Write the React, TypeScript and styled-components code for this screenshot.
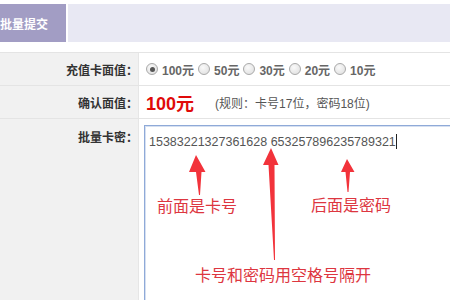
import React from "react"
import styled, { createGlobalStyle } from "styled-components"

const GlobalStyle = createGlobalStyle`
  html, body {
    margin: 0;
    padding: 0;
    overflow: hidden;
    background: #ffffff;
  }
  body {
    font-family: "Liberation Sans", "Noto Sans CJK SC", sans-serif;
    font-size: 12px;
    color: #333;
  }
`

const Page = styled.div`
  width: 450px;
  height: 300px;
  overflow: hidden;
  padding-top: 4px;
  box-sizing: border-box;
`

const TabBar = styled.div`
  display: flex;
  height: 38px;
  gap: 2px;
`

const Tab = styled.div`
  flex: 0 0 66px;
  display: flex;
  align-items: center;
  padding-left: 0;
  background: #a29dc4;
  color: #ffffff;
  font-family: "Noto Sans CJK SC", sans-serif;
  font-size: 12px;
  font-weight: bold;
`

const TabFill = styled.div`
  flex: 1;
  background: #e8e8f3;
`

const Form = styled.div`
  margin-top: 10px;
`

const Row = styled.div<{ $height?: number }>`
  display: grid;
  grid-template-columns: 139px 1fr;
  border-top: 1px solid #e4e4e4;
  height: ${(p) => (p.$height ? `${p.$height}px` : "auto")};
  box-sizing: border-box;
`

const Label = styled.div<{ $top?: boolean }>`
  background: #f1f1f1;
  border-right: 1px solid #e6e6e6;
  display: flex;
  justify-content: flex-end;
  align-items: ${(p) => (p.$top ? "flex-start" : "center")};
  padding-right: 0;
  padding-top: ${(p) => (p.$top ? "9px" : "0")};
  font-family: "Noto Sans CJK SC", sans-serif;
  font-weight: bold;
  font-size: 12px;
  color: #333;
`

const Cell = styled.div<{ $top?: boolean }>`
  display: flex;
  align-items: ${(p) => (p.$top ? "flex-start" : "center")};
  padding-left: ${(p) => (p.$top ? "5px" : "7px")};
  padding-top: ${(p) => (p.$top ? "6px" : "0")};
`

const Option = styled.label`
  display: inline-flex;
  align-items: center;
  gap: 4px;
  margin-right: 4px;
  font-weight: bold;
  color: #666;
`

const Radio = styled.input.attrs({ type: "radio" })`
  appearance: none;
  margin: 0;
  width: 12px;
  height: 12px;
  border-radius: 50%;
  border: 1px solid #a9a9a9;
  background: radial-gradient(circle at 40% 35%, #fafafa 0%, #dcdcdc 100%);
  box-sizing: border-box;
  display: grid;
  place-items: center;

  &:checked::after {
    content: "";
    width: 5px;
    height: 5px;
    border-radius: 50%;
    background: #555;
  }
`

const Amount = styled.span`
  color: #e00a0a;
  font-size: 18px;
  font-weight: bold;
  margin-right: 21px;
`

const Rule = styled.span`
  color: #555;
  font-size: 12px;
`

const CardArea = styled.div`
  position: relative;
  width: 330px;
  height: 200px;
`

const CardBox = styled.div`
  width: 100%;
  height: 100%;
  box-sizing: border-box;
  border: 1px solid #8faad8;
  box-shadow: inset 0 0 0 1px #d6e0f1;
  padding: 8px 4px;
  font-size: 12.5px;
  line-height: 16px;
  color: #555;
  background: #fff;
`

const Caret = styled.span`
  display: inline-block;
  width: 1px;
  height: 15px;
  background: #222;
  vertical-align: -3px;
`

const Overlay = styled.div`
  position: absolute;
  inset: 0;
  pointer-events: none;
`

const Note = styled.span<{ $x: number; $y: number }>`
  position: absolute;
  left: ${(p) => p.$x}px;
  top: ${(p) => p.$y}px;
  font-family: "Noto Sans CJK SC", sans-serif;
  font-size: 16px;
  line-height: 16px;
  color: #dd3640;
  white-space: nowrap;
`

const ArrowLayer = styled.svg`
  position: absolute;
  left: 0;
  top: 0;
`

const amounts = ["100元", "50元", "30元", "20元", "10元"]

function Arrows() {
  return (
    <ArrowLayer width="330" height="200" viewBox="0 0 330 200">
      <g fill="#f2333b">
        <path d="M52 30 L61.5 47 L57.5 47 L56 70 L55 70 L52 47 L45 47 Z" />
        <path d="M127 23 L134.5 40 L130.5 40 L131 135 L130 135 L124.5 40 L119 40 Z" />
        <path d="M203 34 L210.5 47 L206 47 L204.5 67 L203.5 67 L201.5 47 L197 47 Z" />
      </g>
    </ArrowLayer>
  )
}

export default function App() {
  return (
    <Page>
      <GlobalStyle />
      <TabBar>
        <Tab>批量提交</Tab>
        <TabFill />
      </TabBar>
      <Form>
        <Row $height={33}>
          <Label>充值卡面值：</Label>
          <Cell>
            {amounts.map((a, i) => (
              <Option key={a}>
                <Radio name="amount" defaultChecked={i === 0} />
                {a}
              </Option>
            ))}
          </Cell>
        </Row>
        <Row $height={33}>
          <Label>确认面值：</Label>
          <Cell>
            <Amount>100元</Amount>
            <Rule>(规则：卡号17位，密码18位)</Rule>
          </Cell>
        </Row>
        <Row $height={200}>
          <Label $top>批量卡密：</Label>
          <Cell $top>
            <CardArea>
              <CardBox>
                15383221327361628 653257896235789321
                <Caret />
              </CardBox>
              <Overlay>
                <Arrows />
                <Note $x={13} $y={72}>前面是卡号</Note>
                <Note $x={167} $y={71}>后面是密码</Note>
                <Note $x={51} $y={141}>卡号和密码用空格号隔开</Note>
              </Overlay>
            </CardArea>
          </Cell>
        </Row>
      </Form>
    </Page>
  )
}
